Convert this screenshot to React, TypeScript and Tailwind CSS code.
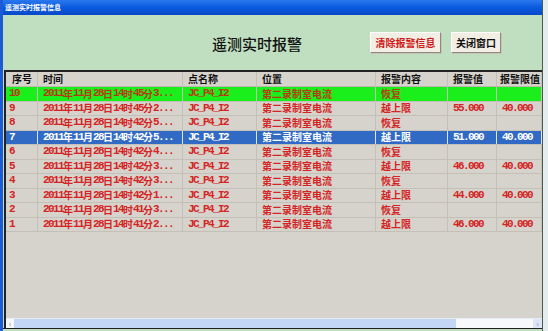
import React from "react"

type Row = {
  no: string
  time: string
  name: string
  place: string
  content: string
  value: string
  limit: string
  kind: "green" | "blue" | "normal"
}

const rows: Row[] = [
  { no: "10", time: "2011年11月28日14时45分3...", name: "JC_P4_I2", place: "第二录制室电流", content: "恢复", value: "", limit: "", kind: "green" },
  { no: "9", time: "2011年11月28日14时45分2...", name: "JC_P4_I2", place: "第二录制室电流", content: "越上限", value: "55.000", limit: "40.000", kind: "normal" },
  { no: "8", time: "2011年11月28日14时42分5...", name: "JC_P4_I2", place: "第二录制室电流", content: "恢复", value: "", limit: "", kind: "normal" },
  { no: "7", time: "2011年11月28日14时42分5...", name: "JC_P4_I2", place: "第二录制室电流", content: "越上限", value: "51.000", limit: "40.000", kind: "blue" },
  { no: "6", time: "2011年11月28日14时42分4...", name: "JC_P4_I2", place: "第二录制室电流", content: "恢复", value: "", limit: "", kind: "normal" },
  { no: "5", time: "2011年11月28日14时42分3...", name: "JC_P4_I2", place: "第二录制室电流", content: "越上限", value: "46.000", limit: "40.000", kind: "normal" },
  { no: "4", time: "2011年11月28日14时42分3...", name: "JC_P4_I2", place: "第二录制室电流", content: "恢复", value: "", limit: "", kind: "normal" },
  { no: "3", time: "2011年11月28日14时42分1...", name: "JC_P4_I2", place: "第二录制室电流", content: "越上限", value: "44.000", limit: "40.000", kind: "normal" },
  { no: "2", time: "2011年11月28日14时41分3...", name: "JC_P4_I2", place: "第二录制室电流", content: "恢复", value: "", limit: "", kind: "normal" },
  { no: "1", time: "2011年11月28日14时41分2...", name: "JC_P4_I2", place: "第二录制室电流", content: "越上限", value: "46.000", limit: "40.000", kind: "normal" },
]

const cols = ["w-[32px]", "w-[145px]", "w-[74px]", "w-[119px]", "w-[72px]", "w-[49px]", "w-[45px]"]
const heads = ["序号", "时间", "点名称", "位置", "报警内容", "报警值", "报警限值"]

// ascii runs in a narrow mono face, chinese runs in bold CJK
function Mixed({ text }: { text: string }) {
  const parts = text.match(/[\x00-\x7f]+|[^\x00-\x7f]+/g) || []
  return (
    <>
      {parts.map((p, i) =>
        /^[\x00-\x7f]/.test(p) ? (
          <span key={i} className="text-[11px] font-bold tracking-[-1.6px]" style={{ fontFamily: '"Liberation Mono", monospace' }}>
            {p}
          </span>
        ) : (
          <span key={i} className="text-[10px] font-bold" style={{ fontFamily: '"Noto Sans CJK SC", sans-serif' }}>
            {p}
          </span>
        )
      )}
    </>
  )
}

export default function App() {
  return (
    <div className="w-[548px] h-[331px] bg-[#e4ecee] overflow-hidden flex" style={{ fontFamily: '"Noto Sans CJK SC", sans-serif' }}>
      <div className="w-[543px] h-full flex flex-col border-l-[3px] border-[#1d5bd6] border-r border-r-[#4a5a50] bg-[#bfdfc0]">
        {/* TITLE BAR */}
        <div className="h-[15px] bg-gradient-to-b from-[#2a78ee] via-[#0a5ae0] to-[#0848c8] flex items-center pl-[2px]">
          <span className="text-[7px] font-bold text-white leading-none">遥测实时报警信息</span>
        </div>

        {/* HEADER AREA */}
        <div className="h-[55px] relative">
          <div className="absolute left-[209px] top-[21px] text-[15px] font-medium leading-none text-[#111]" style={{ fontFamily: '"Noto Sans CJK SC", serif' }}>
            遥测实时报警
          </div>
          <div className="absolute left-[367px] top-[17px] flex gap-[10px]">
            <button className="w-[71px] h-[21px] bg-[#f2eee4] border border-t-white border-l-white border-b-[#8a8a80] border-r-[#8a8a80] shadow-[1px_1px_0_#c8c4b8] text-[10px] font-bold text-[#d01818] leading-none">
              清除报警信息
            </button>
            <button className="w-[50px] h-[21px] bg-[#f2eee4] border border-t-white border-l-white border-b-[#8a8a80] border-r-[#8a8a80] shadow-[1px_1px_0_#c8c4b8] text-[10px] font-bold text-[#111] leading-none">
              关闭窗口
            </button>
          </div>
        </div>

        {/* TABLE */}
        <div className="ml-[1px] w-[538px] h-[258px] border-t-2 border-l-2 border-[#222] bg-[#d6d3cc] flex flex-col">
          <div className="flex h-[15px] border-b border-[#bcb8b0]">
            {heads.map((h, i) => (
              <div key={h} className={`${cols[i]} shrink-0 border-r border-[#c4c0b8] flex items-center ${i === 0 ? "pl-[6px]" : i === 6 ? "pl-[3px]" : "pl-[5px]"} text-[10px] font-bold text-[#111] leading-none whitespace-nowrap overflow-hidden`}>
                {h}
              </div>
            ))}
          </div>
          {rows.map((r) => {
            const bg = r.kind === "green" ? "bg-[#1bef1b]" : r.kind === "blue" ? "bg-[#316ac5]" : ""
            const fg = r.kind === "green" ? "text-[#b83a14]" : r.kind === "blue" ? "text-white" : "text-[#d42424]"
            const vals = [r.no, r.time, r.name, r.place, r.content, r.value, r.limit]
            return (
              <div key={r.no} className={`flex h-[14.5px] border-b border-[#c4c0b8] ${bg} ${fg}`}>
                {vals.map((v, i) => (
                  <div
                    key={i}
                    className={`${cols[i]} shrink-0 border-r ${r.kind === "blue" ? "border-[#dce4f4]" : "border-[#c4c0b8]"} flex items-center ${i === 0 ? "pl-[3px]" : "pl-[5px]"} leading-none whitespace-nowrap overflow-hidden`}
                  >
                    <Mixed text={v} />
                  </div>
                ))}
              </div>
            )
          })}
          <div className="flex-1" />
          {/* H SCROLLBAR */}
          <div className="h-[10px] flex items-center bg-[#f6f8fc] border-t border-[#e8ecf4]">
            <div className="w-[8px] h-full flex items-center justify-center text-[7px] text-[#4a6ab0] leading-none">‹</div>
            <div className="w-[442px] h-full bg-[#c4d6f6]" />
            <div className="flex-1" />
            <div className="w-[9px] h-full flex items-center justify-center text-[7px] text-[#4a6ab0] leading-none bg-[#dde6f6]">›</div>
          </div>
        </div>
        <div className="flex-1 bg-[#bfdfc0] border-t border-[#222]" />
      </div>
    </div>
  )
}
